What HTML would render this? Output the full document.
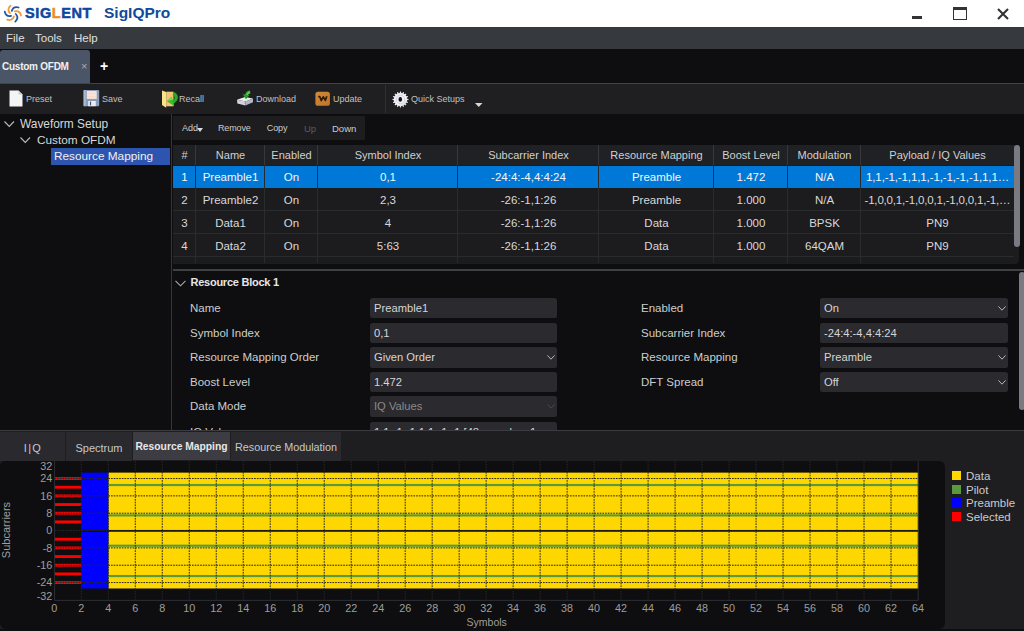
<!DOCTYPE html>
<html><head><meta charset="utf-8">
<style>
*{margin:0;padding:0;box-sizing:border-box}
html,body{width:1024px;height:631px;overflow:hidden;background:#0e0e10;font-family:"Liberation Sans",sans-serif;color:#d8d8d8}
.a{position:absolute}
.t{position:absolute;white-space:nowrap}
.tb{position:absolute;font-size:9px;color:#c0c0c0;top:94.2px;white-space:nowrap}
.hdr{position:absolute;top:145px;height:20px;background:#202125;font-size:11px;color:#d0d0d0;text-align:center;line-height:20px;white-space:nowrap}
.cell{position:absolute;height:23px;font-size:11.5px;text-align:center;line-height:23px;color:#d9d9d9;white-space:nowrap;overflow:hidden}
.lbl{font-size:11.5px;color:#cdcdcd;line-height:14px}
.box{position:absolute;height:20.4px;background:#2b2a2f;border-radius:2.5px;font-size:11.2px;color:#d6d6d6;line-height:20px;padding-left:4px;white-space:nowrap;overflow:hidden}
.ax{position:absolute;font-size:10.8px;color:#9e9e9e;white-space:nowrap;line-height:12px}
.btab{position:absolute;top:431.5px;height:29px;background:#29292e;font-size:11px;color:#c8c8c8;line-height:32px;text-align:center;white-space:nowrap}
.leg{position:absolute;left:966px;font-size:11.5px;color:#cacaca;white-space:nowrap;line-height:13px}
.sw{position:absolute;left:952px;width:9px;height:9px}
</style></head><body>
<!-- title bar -->
<div class="a" style="left:0;top:0;width:1024px;height:27px;background:#fff"></div>
<svg class="a" style="left:0px;top:0px" width="26" height="27" viewBox="0 0 26 27">
 <g fill="none" stroke-width="1.75" stroke-linecap="round" transform="translate(12.9 13.6)">
  <path d="M-2.4 -8Q-6.35 -4.3 -2.9 -0.4" stroke="#f29a36"/>
  <path d="M-2.4 -8Q-6.35 -4.3 -2.9 -0.4" stroke="#2456a6" transform="rotate(60)"/>
  <path d="M-2.4 -8Q-6.35 -4.3 -2.9 -0.4" stroke="#f29a36" transform="rotate(120)"/>
  <path d="M-2.4 -8Q-6.35 -4.3 -2.9 -0.4" stroke="#2456a6" transform="rotate(180)"/>
  <path d="M-2.4 -8Q-6.35 -4.3 -2.9 -0.4" stroke="#f29a36" transform="rotate(240)"/>
  <path d="M-2.4 -8Q-6.35 -4.3 -2.9 -0.4" stroke="#2456a6" transform="rotate(300)"/>
 </g>
</svg>
<div class="t" style="left:25px;top:5px;font-size:14.5px;line-height:17px;font-weight:bold;color:#0d479e;letter-spacing:0.6px;-webkit-text-stroke:0.5px #0d479e">SIG<span style="color:#f08c1e;-webkit-text-stroke:0.5px #f08c1e">L</span>ENT</div>
<div class="t" style="left:104px;top:4px;font-size:15.5px;line-height:18px;font-weight:bold;color:#124a9c">SigIQPro</div>
<div class="a" style="left:912px;top:16px;width:10px;height:3px;background:#333"></div>
<div class="a" style="left:953px;top:7px;width:14px;height:13px;border:1.6px solid #333;border-top-width:3.5px"></div>
<svg class="a" style="left:997px;top:8px" width="12" height="12" viewBox="0 0 12 12"><path d="M1 1L11 11M11 1L1 11" stroke="#333" stroke-width="2.1"/></svg>
<!-- menu -->
<div class="a" style="left:0;top:27px;width:1024px;height:21.5px;background:#363a3e"></div>
<div class="t" style="left:6px;top:32px;font-size:11.5px;color:#e0e0e0">File</div>
<div class="t" style="left:35px;top:32px;font-size:11.5px;color:#e0e0e0">Tools</div>
<div class="t" style="left:74px;top:32px;font-size:11.5px;color:#e0e0e0">Help</div>
<!-- tab bar -->
<div class="a" style="left:0;top:49px;width:1024px;height:34px;background:#0e0e10"></div>
<div class="a" style="left:0;top:50px;width:90px;height:33px;background:#4a5568;border-radius:3px 3px 0 0"></div>
<div class="t" style="left:2px;top:61px;font-size:10px;font-weight:bold;color:#f0f0f0;letter-spacing:-0.25px">Custom OFDM</div>
<div class="t" style="left:81px;top:60px;font-size:11px;color:#aab">&#215;</div>
<div class="t" style="left:100px;top:58px;font-size:14px;font-weight:bold;color:#fff">+</div>
<!-- toolbar -->
<div class="a" style="left:0;top:83px;width:1024px;height:31px;background:#1f1f22;border-top:1.5px solid #3b4452"></div>
<div class="a" style="left:384.5px;top:85px;width:1.5px;height:28px;background:#2e3034"></div>
<svg class="a" style="left:9px;top:90px" width="14" height="17" viewBox="0 0 14 17"><path d="M0.5 0.5H9.5L13.5 4.5V16.5H0.5Z" fill="#f4f4f4"/><path d="M9.5 0.5V4.5H13.5" fill="#ccc"/></svg>
<div class="tb" style="left:26px">Preset</div>
<svg class="a" style="left:83px;top:90px" width="17" height="17" viewBox="0 0 17 17"><rect x="0.6" y="0" width="15.6" height="16.2" rx="1.2" fill="#8a9dba"/><rect x="0.6" y="0" width="2" height="16.2" fill="#a9bad2"/><rect x="3.8" y="1" width="9.9" height="7.9" fill="#fbe2d6"/><rect x="3.8" y="3.5" width="9.9" height="0.5" fill="#f3d0c4"/><rect x="3.8" y="6" width="9.9" height="0.5" fill="#f3d0c4"/><rect x="5.2" y="11" width="7.6" height="5.2" fill="#ececee"/><rect x="6.9" y="11.6" width="1.2" height="3.8" fill="#44536a"/></svg>
<div class="tb" style="left:102px">Save</div>
<svg class="a" style="left:158px;top:86px" width="24" height="24" viewBox="0 0 24 24"><path d="M8.2 5.7H15.5V20.3H8.2Z" fill="#f2c670"/><path d="M4 4.6L8.2 6.1V21.7L4 19Z" fill="#f6e38c"/><path d="M15.3 7.6Q19.6 9.6 17.6 13.6Q16.6 15.4 14.2 15.6" stroke="#27a827" stroke-width="3.4" fill="none"/><path d="M8.9 15.3L13.8 10.4L16.1 20Z" fill="#3cbc30"/><path d="M9.6 15.2L13.6 11.3L14.2 13.6Z" fill="#86dc64"/></svg>
<div class="tb" style="left:179px">Recall</div>
<svg class="a" style="left:234px;top:86px" width="24" height="24" viewBox="0 0 24 24"><path d="M3 13.7L11 11L19 12.5L11.4 15.6Z" fill="#ececf0"/><path d="M3 13.7L11.4 15.6V19.4L3.4 17.5Z" fill="#d4d4dc"/><path d="M11.4 15.6L19 12.5V16.3L11.4 19.4Z" fill="#b4b6c8"/><rect x="10.6" y="16.9" width="1.4" height="1.1" fill="#3ecf3e"/><path d="M16.2 6Q12.8 6.4 12.4 9.6" stroke="#2cb82c" stroke-width="2.8" fill="none"/><path d="M8.8 8.3L15.4 9L11.9 13.2Z" fill="#18a418"/><path d="M15.6 6.4Q13.6 7 13.1 8.9" stroke="#90e07c" stroke-width="0.9" fill="none"/></svg>
<div class="tb" style="left:256px">Download</div>
<svg class="a" style="left:312px;top:86px" width="24" height="24" viewBox="0 0 24 24"><defs><linearGradient id="ug" x1="0" y1="0" x2="1" y2="1"><stop offset="0" stop-color="#d08a3a"/><stop offset="1" stop-color="#c27426"/></linearGradient></defs><rect x="3.4" y="5.7" width="14.5" height="14.1" rx="2.6" fill="url(#ug)"/><path d="M6.3 10.8Q7.6 10.1 8.2 11.4L9.2 14.6L11.3 10.8L13.3 14.4L14.8 10.3" stroke="#2e1b08" stroke-width="1.7" fill="none" stroke-linejoin="round"/></svg>
<div class="tb" style="left:333px">Update</div>
<svg class="a" style="left:392px;top:90.5px" width="17" height="17" viewBox="0 0 17 17"><defs><linearGradient id="gg" x1="0" y1="0" x2="1" y2="1"><stop offset="0" stop-color="#e6e2fa"/><stop offset="0.6" stop-color="#f4f4f6"/><stop offset="1" stop-color="#b8c6cc"/></linearGradient></defs><polygon points="15.05,7.72 16.49,8.06 16.49,8.94 15.05,9.28 14.85,10.29 16.05,11.15 15.71,11.96 14.26,11.72 13.68,12.59 14.46,13.84 13.84,14.46 12.59,13.68 11.72,14.26 11.96,15.71 11.15,16.05 10.29,14.85 9.28,15.05 8.94,16.49 8.06,16.49 7.72,15.05 6.71,14.85 5.85,16.05 5.04,15.71 5.28,14.26 4.41,13.68 3.16,14.46 2.54,13.84 3.32,12.59 2.74,11.72 1.29,11.96 0.95,11.15 2.15,10.29 1.95,9.28 0.51,8.94 0.51,8.06 1.95,7.72 2.15,6.71 0.95,5.85 1.29,5.04 2.74,5.28 3.32,4.41 2.54,3.16 3.16,2.54 4.41,3.32 5.28,2.74 5.04,1.29 5.85,0.95 6.71,2.15 7.72,1.95 8.06,0.51 8.94,0.51 9.28,1.95 10.29,2.15 11.15,0.95 11.96,1.29 11.72,2.74 12.59,3.32 13.84,2.54 14.46,3.16 13.68,4.41 14.26,5.28 15.71,5.04 16.05,5.85 14.85,6.71" fill="url(#gg)"/><circle cx="8.5" cy="8.5" r="4.2" fill="none" stroke="#d4d2e0" stroke-width="1"/><ellipse cx="8.3" cy="8.4" rx="1.8" ry="2.3" fill="#151515"/></svg>
<div class="tb" style="left:411px">Quick Setups</div>
<svg class="a" style="left:475px;top:102.6px" width="7.5" height="4" viewBox="0 0 7.5 4"><path d="M0 0H7.5L3.75 4Z" fill="#d8d8d8"/></svg>
<!-- tree -->
<div class="a" style="left:170.6px;top:114px;width:1.6px;height:316px;background:#33363a"></div>
<svg class="a" style="left:3.5px;top:121px" width="11" height="7" viewBox="0 0 11 7"><path d="M0.5 0.5L5.25 5.5L10 0.5" stroke="#bbb" stroke-width="1.1" fill="none"/></svg>
<div class="t" style="left:20px;top:117.3px;font-size:11.9px;color:#d8d8d8">Waveform Setup</div>
<svg class="a" style="left:19.8px;top:137px" width="11" height="7" viewBox="0 0 11 7"><path d="M0.5 0.5L5.25 5.5L10 0.5" stroke="#bbb" stroke-width="1.1" fill="none"/></svg>
<div class="t" style="left:37px;top:133.3px;font-size:11.8px;color:#d8d8d8">Custom OFDM</div>
<div class="a" style="left:51px;top:148px;width:119px;height:16.5px;background:#2d55b0"></div>
<div class="t" style="left:54px;top:149.3px;font-size:11.8px;color:#f0f0f0">Resource Mapping</div>
<!-- table actions -->
<div class="a" style="left:173px;top:116px;width:192px;height:24px;background:#1d1d20"></div>
<div class="t" style="left:182px;top:122.5px;font-size:9px;color:#cccccc">Add</div>
<svg class="a" style="left:197px;top:128px" width="6" height="4" viewBox="0 0 6 4"><path d="M0 0H6L3 4Z" fill="#ddd"/></svg>
<div class="t" style="left:218px;top:122.5px;font-size:9px;color:#cccccc;letter-spacing:-0.15px">Remove</div>
<div class="t" style="left:266.8px;top:122.5px;font-size:9px;color:#cccccc;letter-spacing:-0.1px">Copy</div>
<div class="t" style="left:304px;top:122.5px;font-size:9.5px;color:#5c5c5c">Up</div>
<div class="t" style="left:332px;top:122.5px;font-size:9.5px;color:#cccccc">Down</div>
<!-- table -->
<div class="a" style="left:173px;top:145px;width:846px;height:119px;background:#1c1c1f;border-radius:0 0 4px 0"></div>
<div class="hdr" style="left:173px;width:23px">#</div>
<div class="hdr" style="left:196px;width:69px">Name</div>
<div class="hdr" style="left:265px;width:53px">Enabled</div>
<div class="hdr" style="left:318px;width:140px">Symbol Index</div>
<div class="hdr" style="left:458px;width:141px">Subcarrier Index</div>
<div class="hdr" style="left:599px;width:115px">Resource Mapping</div>
<div class="hdr" style="left:714px;width:74px">Boost Level</div>
<div class="hdr" style="left:788px;width:73px">Modulation</div>
<div class="hdr" style="left:861px;width:153px">Payload / IQ Values</div>
<div class="a" style="left:195px;top:145px;width:1px;height:20px;background:#36383c"></div>
<div class="a" style="left:264px;top:145px;width:1px;height:20px;background:#36383c"></div>
<div class="a" style="left:317px;top:145px;width:1px;height:20px;background:#36383c"></div>
<div class="a" style="left:457px;top:145px;width:1px;height:20px;background:#36383c"></div>
<div class="a" style="left:598px;top:145px;width:1px;height:20px;background:#36383c"></div>
<div class="a" style="left:713px;top:145px;width:1px;height:20px;background:#36383c"></div>
<div class="a" style="left:787px;top:145px;width:1px;height:20px;background:#36383c"></div>
<div class="a" style="left:860px;top:145px;width:1px;height:20px;background:#36383c"></div>
<div class="a" style="left:173px;top:165.8px;width:841px;height:22.2px;background:#0078d7"></div>
<div class="cell" style="left:173px;width:23px;top:166px;color:#f6f6f6;">1</div>
<div class="cell" style="left:196px;width:69px;top:166px;color:#f6f6f6;">Preamble1</div>
<div class="cell" style="left:265px;width:53px;top:166px;color:#f6f6f6;">On</div>
<div class="cell" style="left:318px;width:140px;top:166px;color:#f6f6f6;">0,1</div>
<div class="cell" style="left:458px;width:141px;top:166px;color:#f6f6f6;">-24:4:-4,4:4:24</div>
<div class="cell" style="left:599px;width:115px;top:166px;color:#f6f6f6;">Preamble</div>
<div class="cell" style="left:714px;width:74px;top:166px;color:#f6f6f6;">1.472</div>
<div class="cell" style="left:788px;width:73px;top:166px;color:#f6f6f6;">N/A</div>
<div class="cell" style="left:861px;width:153px;top:166px;text-align:left;padding-left:5px;letter-spacing:-0.11px;color:#f6f6f6;">1,1,-1,-1,1,1,-1,-1,-1,-1,1,1&hellip;</div>
<div class="a" style="left:173px;top:188px;width:841px;height:23px;background:#1c1c1f"></div>
<div class="cell" style="left:173px;width:23px;top:189px;">2</div>
<div class="cell" style="left:196px;width:69px;top:189px;">Preamble2</div>
<div class="cell" style="left:265px;width:53px;top:189px;">On</div>
<div class="cell" style="left:318px;width:140px;top:189px;">2,3</div>
<div class="cell" style="left:458px;width:141px;top:189px;">-26:-1,1:26</div>
<div class="cell" style="left:599px;width:115px;top:189px;">Preamble</div>
<div class="cell" style="left:714px;width:74px;top:189px;">1.000</div>
<div class="cell" style="left:788px;width:73px;top:189px;">N/A</div>
<div class="cell" style="left:861px;width:153px;top:189px;text-align:left;padding-left:5px;letter-spacing:-0.18px;padding-left:3.5px;">-1,0,0,1,-1,0,0,1,-1,0,0,1,-1,&hellip;</div>
<div class="a" style="left:173px;top:211px;width:841px;height:23px;background:#1c1c1f"></div>
<div class="cell" style="left:173px;width:23px;top:212px;">3</div>
<div class="cell" style="left:196px;width:69px;top:212px;">Data1</div>
<div class="cell" style="left:265px;width:53px;top:212px;">On</div>
<div class="cell" style="left:318px;width:140px;top:212px;">4</div>
<div class="cell" style="left:458px;width:141px;top:212px;">-26:-1,1:26</div>
<div class="cell" style="left:599px;width:115px;top:212px;">Data</div>
<div class="cell" style="left:714px;width:74px;top:212px;">1.000</div>
<div class="cell" style="left:788px;width:73px;top:212px;">BPSK</div>
<div class="cell" style="left:861px;width:153px;top:212px;">PN9</div>
<div class="a" style="left:173px;top:234px;width:841px;height:23px;background:#1c1c1f"></div>
<div class="cell" style="left:173px;width:23px;top:235px;">4</div>
<div class="cell" style="left:196px;width:69px;top:235px;">Data2</div>
<div class="cell" style="left:265px;width:53px;top:235px;">On</div>
<div class="cell" style="left:318px;width:140px;top:235px;">5:63</div>
<div class="cell" style="left:458px;width:141px;top:235px;">-26:-1,1:26</div>
<div class="cell" style="left:599px;width:115px;top:235px;">Data</div>
<div class="cell" style="left:714px;width:74px;top:235px;">1.000</div>
<div class="cell" style="left:788px;width:73px;top:235px;">64QAM</div>
<div class="cell" style="left:861px;width:153px;top:235px;">PN9</div>
<div class="a" style="left:173px;top:257px;width:841px;height:6px;background:#1c1c1f"></div>
<div class="a" style="left:173px;top:210px;width:841px;height:1px;background:#2a2b2f"></div>
<div class="a" style="left:173px;top:233px;width:841px;height:1px;background:#2a2b2f"></div>
<div class="a" style="left:173px;top:256px;width:841px;height:1px;background:#2a2b2f"></div>
<div class="a" style="left:195px;top:165px;width:1px;height:98px;background:#2a2b2f"></div>
<div class="a" style="left:264px;top:165px;width:1px;height:98px;background:#2a2b2f"></div>
<div class="a" style="left:317px;top:165px;width:1px;height:98px;background:#2a2b2f"></div>
<div class="a" style="left:457px;top:165px;width:1px;height:98px;background:#2a2b2f"></div>
<div class="a" style="left:598px;top:165px;width:1px;height:98px;background:#2a2b2f"></div>
<div class="a" style="left:713px;top:165px;width:1px;height:98px;background:#2a2b2f"></div>
<div class="a" style="left:787px;top:165px;width:1px;height:98px;background:#2a2b2f"></div>
<div class="a" style="left:860px;top:165px;width:1px;height:98px;background:#2a2b2f"></div>
<div class="a" style="left:1014px;top:145px;width:6px;height:102px;background:#7a7a82;border-radius:3px"></div>
<!-- splitter -->
<div class="a" style="left:173px;top:269px;width:851px;height:2px;background:#3e4146"></div>
<div class="a" style="left:1018.6px;top:272.2px;width:6px;height:137.5px;background:#7a7a82;border-radius:3px"></div>
<!-- resource block -->
<svg class="a" style="left:175px;top:280px" width="11" height="7" viewBox="0 0 11 7"><path d="M0.5 0.8L5.5 5.8L10.5 0.8" stroke="#aaa" stroke-width="1.1" fill="none"/></svg>
<div class="t" style="left:190.5px;top:275.5px;font-size:11px;font-weight:bold;color:#e6e6e6;letter-spacing:-0.25px">Resource Block 1</div>
<div class="t lbl" style="left:190px;top:301px">Name</div>
<div class="box" style="left:370px;top:298px;width:187px;color:#d6d6d6">Preamble1</div>
<div class="t lbl" style="left:190px;top:325.6px">Symbol Index</div>
<div class="box" style="left:370px;top:322.6px;width:187px;color:#d6d6d6">0,1</div>
<div class="t lbl" style="left:190px;top:350.2px">Resource Mapping Order</div>
<div class="box" style="left:370px;top:347.2px;width:187px;color:#d6d6d6">Given Order<svg class="a" style="right:2.5px;top:8px" width="8" height="5" viewBox="0 0 8 5"><path d="M0.4 0.4L4 4.2L7.6 0.4" stroke="#b8b8b8" stroke-width="1" fill="none"/></svg></div>
<div class="t lbl" style="left:190px;top:374.8px">Boost Level</div>
<div class="box" style="left:370px;top:371.8px;width:187px;color:#d6d6d6">1.472</div>
<div class="t lbl" style="left:190px;top:399.4px">Data Mode</div>
<div class="box" style="left:370px;top:396.4px;width:187px;color:#8a8a8a">IQ Values<svg class="a" style="right:2.5px;top:8px" width="8" height="5" viewBox="0 0 8 5"><path d="M0.4 0.4L4 4.2L7.6 0.4" stroke="#4a4a4e" stroke-width="1" fill="none"/></svg></div>
<div class="t lbl" style="left:190px;top:424.6px">IQ Values</div>
<div class="box" style="left:370px;top:421.6px;width:187px;color:#d6d6d6">1,1,-1,-1,1,1,-1,-1 [48 samples, 1 row]</div>
<div class="t lbl" style="left:641px;top:301px">Enabled</div>
<div class="box" style="left:820px;top:298px;width:188px">On<svg class="a" style="right:2.5px;top:8px" width="8" height="5" viewBox="0 0 8 5"><path d="M0.4 0.4L4 4.2L7.6 0.4" stroke="#b8b8b8" stroke-width="1" fill="none"/></svg></div>
<div class="t lbl" style="left:641px;top:325.6px">Subcarrier Index</div>
<div class="box" style="left:820px;top:322.6px;width:188px">-24:4:-4,4:4:24</div>
<div class="t lbl" style="left:641px;top:350.2px">Resource Mapping</div>
<div class="box" style="left:820px;top:347.2px;width:188px">Preamble<svg class="a" style="right:2.5px;top:8px" width="8" height="5" viewBox="0 0 8 5"><path d="M0.4 0.4L4 4.2L7.6 0.4" stroke="#b8b8b8" stroke-width="1" fill="none"/></svg></div>
<div class="t lbl" style="left:641px;top:374.8px">DFT Spread</div>
<div class="box" style="left:820px;top:371.8px;width:188px">Off<svg class="a" style="right:2.5px;top:8px" width="8" height="5" viewBox="0 0 8 5"><path d="M0.4 0.4L4 4.2L7.6 0.4" stroke="#b8b8b8" stroke-width="1" fill="none"/></svg></div>
<!-- bottom tabs -->
<div class="a" style="left:0;top:430px;width:1024px;height:198.5px;background:#1e1e21"></div>
<div class="a" style="left:0;top:429.8px;width:1024px;height:1.7px;background:#3a3c42"></div>
<div class="btab" style="left:0;width:65px;letter-spacing:1.3px;padding-left:1px">I|Q</div>
<div class="btab" style="left:66px;width:66px">Spectrum</div>
<div class="btab" style="left:133px;width:97px;top:432px;height:27.5px;line-height:29.5px;background:#3c3c42;font-weight:bold;font-size:10.3px;color:#e8e8e8">Resource Mapping</div>
<div class="btab" style="left:231px;width:110px;font-size:10.8px;line-height:31px">Resource Modulation</div>
<!-- chart panel -->
<div class="a" style="left:0;top:460.5px;width:944.5px;height:168px;background:#0e0e10;border-radius:5px 6px 6px 6px"></div>
<svg class="a" style="left:0;top:0" width="1024" height="631" viewBox="0 0 1024 631">
<rect x="108.28" y="472.62" width="810.02" height="115.86" fill="#ffd700"/>
<rect x="81.29" y="472.62" width="26.99" height="115.86" fill="#0000ff"/>
<rect x="81.29" y="529.95" width="836.71" height="1.8" fill="#0e0e10"/>
<rect x="108.28" y="483.96" width="809.72" height="2.17" fill="#5a9a3c"/>
<rect x="108.28" y="514.30" width="809.72" height="2.17" fill="#5a9a3c"/>
<rect x="108.28" y="544.64" width="809.72" height="2.17" fill="#5a9a3c"/>
<rect x="108.28" y="574.98" width="809.72" height="2.17" fill="#5a9a3c"/>
<rect x="54.60" y="581.13" width="26.99" height="2.87" fill="#ff0000"/>
<rect x="54.60" y="572.46" width="26.99" height="2.87" fill="#ff0000"/>
<rect x="54.60" y="563.79" width="26.99" height="2.87" fill="#ff0000"/>
<rect x="54.60" y="555.12" width="26.99" height="2.87" fill="#ff0000"/>
<rect x="54.60" y="546.45" width="26.99" height="2.87" fill="#ff0000"/>
<rect x="54.60" y="537.79" width="26.99" height="2.87" fill="#ff0000"/>
<rect x="54.60" y="520.45" width="26.99" height="2.87" fill="#ff0000"/>
<rect x="54.60" y="511.78" width="26.99" height="2.87" fill="#ff0000"/>
<rect x="54.60" y="503.11" width="26.99" height="2.87" fill="#ff0000"/>
<rect x="54.60" y="494.44" width="26.99" height="2.87" fill="#ff0000"/>
<rect x="54.60" y="485.77" width="26.99" height="2.87" fill="#ff0000"/>
<rect x="54.60" y="477.10" width="26.99" height="2.87" fill="#ff0000"/>
<path d="M81.29 461.2V599.9M108.28 461.2V599.9M135.27 461.2V599.9M162.26 461.2V599.9M189.25 461.2V599.9M216.24 461.2V599.9M243.23 461.2V599.9M270.23 461.2V599.9M297.22 461.2V599.9M324.21 461.2V599.9M351.20 461.2V599.9M378.19 461.2V599.9M405.18 461.2V599.9M432.17 461.2V599.9M459.16 461.2V599.9M486.15 461.2V599.9M513.14 461.2V599.9M540.13 461.2V599.9M567.12 461.2V599.9M594.11 461.2V599.9M621.10 461.2V599.9M648.09 461.2V599.9M675.08 461.2V599.9M702.08 461.2V599.9M729.07 461.2V599.9M756.06 461.2V599.9M783.05 461.2V599.9M810.04 461.2V599.9M837.03 461.2V599.9M864.02 461.2V599.9M891.01 461.2V599.9M54.3 478.54H918.0M54.3 495.87H918.0M54.3 513.21H918.0M54.3 530.55H918.0M54.3 547.89H918.0M54.3 565.22H918.0M54.3 582.56H918.0" stroke="#262626" stroke-width="1" stroke-dasharray="1.7 1" fill="none"/>
<path d="M54.6 461.2V600.4H918.2V461.2" stroke="#2c2e34" stroke-width="1" fill="none"/>
</svg>
<div class="ax" style="right:971.7px;top:590.1px">-32</div>
<div class="ax" style="right:971.7px;top:576.3px">-24</div>
<div class="ax" style="right:971.7px;top:559.0px">-16</div>
<div class="ax" style="right:971.7px;top:541.6px">-8</div>
<div class="ax" style="right:971.7px;top:524.3px">0</div>
<div class="ax" style="right:971.7px;top:507.0px">8</div>
<div class="ax" style="right:971.7px;top:489.6px">16</div>
<div class="ax" style="right:971.7px;top:472.3px">24</div>
<div class="ax" style="right:971.7px;top:460.1px">32</div>
<div class="ax" style="left:34.3px;width:40px;text-align:center;top:602px">0</div>
<div class="ax" style="left:61.3px;width:40px;text-align:center;top:602px">2</div>
<div class="ax" style="left:88.3px;width:40px;text-align:center;top:602px">4</div>
<div class="ax" style="left:115.3px;width:40px;text-align:center;top:602px">6</div>
<div class="ax" style="left:142.3px;width:40px;text-align:center;top:602px">8</div>
<div class="ax" style="left:169.3px;width:40px;text-align:center;top:602px">10</div>
<div class="ax" style="left:196.2px;width:40px;text-align:center;top:602px">12</div>
<div class="ax" style="left:223.2px;width:40px;text-align:center;top:602px">14</div>
<div class="ax" style="left:250.2px;width:40px;text-align:center;top:602px">16</div>
<div class="ax" style="left:277.2px;width:40px;text-align:center;top:602px">18</div>
<div class="ax" style="left:304.2px;width:40px;text-align:center;top:602px">20</div>
<div class="ax" style="left:331.2px;width:40px;text-align:center;top:602px">22</div>
<div class="ax" style="left:358.2px;width:40px;text-align:center;top:602px">24</div>
<div class="ax" style="left:385.2px;width:40px;text-align:center;top:602px">26</div>
<div class="ax" style="left:412.2px;width:40px;text-align:center;top:602px">28</div>
<div class="ax" style="left:439.2px;width:40px;text-align:center;top:602px">30</div>
<div class="ax" style="left:466.2px;width:40px;text-align:center;top:602px">32</div>
<div class="ax" style="left:493.1px;width:40px;text-align:center;top:602px">34</div>
<div class="ax" style="left:520.1px;width:40px;text-align:center;top:602px">36</div>
<div class="ax" style="left:547.1px;width:40px;text-align:center;top:602px">38</div>
<div class="ax" style="left:574.1px;width:40px;text-align:center;top:602px">40</div>
<div class="ax" style="left:601.1px;width:40px;text-align:center;top:602px">42</div>
<div class="ax" style="left:628.1px;width:40px;text-align:center;top:602px">44</div>
<div class="ax" style="left:655.1px;width:40px;text-align:center;top:602px">46</div>
<div class="ax" style="left:682.1px;width:40px;text-align:center;top:602px">48</div>
<div class="ax" style="left:709.1px;width:40px;text-align:center;top:602px">50</div>
<div class="ax" style="left:736.1px;width:40px;text-align:center;top:602px">52</div>
<div class="ax" style="left:763.0px;width:40px;text-align:center;top:602px">54</div>
<div class="ax" style="left:790.0px;width:40px;text-align:center;top:602px">56</div>
<div class="ax" style="left:817.0px;width:40px;text-align:center;top:602px">58</div>
<div class="ax" style="left:844.0px;width:40px;text-align:center;top:602px">60</div>
<div class="ax" style="left:871.0px;width:40px;text-align:center;top:602px">62</div>
<div class="ax" style="left:898.0px;width:40px;text-align:center;top:602px">64</div>
<div class="ax" style="left:6.4px;top:530px;width:0;height:0"><span style="position:absolute;left:-30px;top:-6px;width:60px;text-align:center;font-size:11px;transform:rotate(-90deg)">Subcarriers</span></div>
<div class="ax" style="left:446.7px;width:80px;text-align:center;top:615.5px;font-size:10.5px">Symbols</div>
<div class="sw" style="top:471px;background:#ffd700"></div><div class="leg" style="top:470px">Data</div>
<div class="sw" style="top:485px;background:#5a9a3c"></div><div class="leg" style="top:484px">Pilot</div>
<div class="sw" style="top:498px;background:#0000ff"></div><div class="leg" style="top:497px">Preamble</div>
<div class="sw" style="top:512px;background:#ff0000"></div><div class="leg" style="top:511px">Selected</div>

</body></html>
